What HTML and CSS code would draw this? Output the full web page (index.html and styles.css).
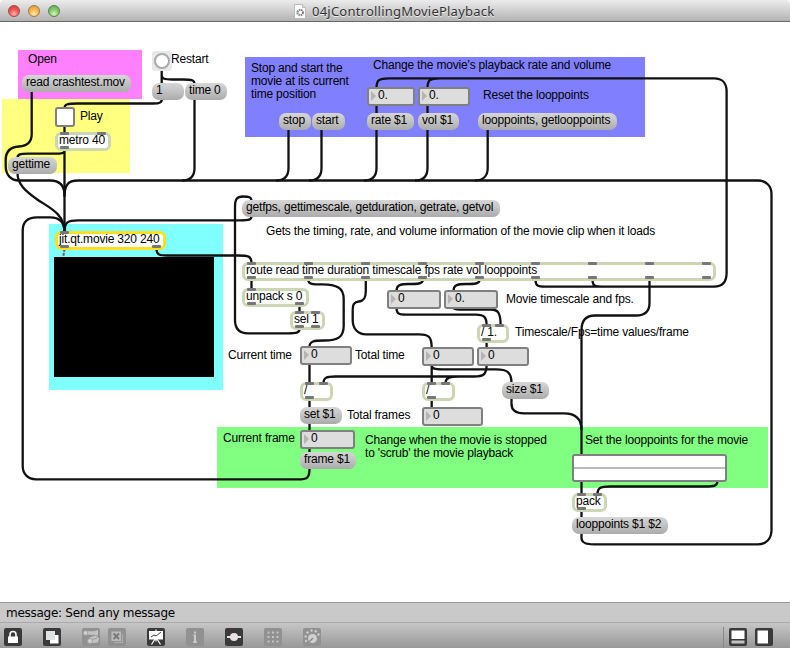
FILE: index.html
```html
<!DOCTYPE html>
<html lang="en">
<head>
<meta charset="utf-8">
<title>04jControllingMoviePlayback</title>
<link rel="stylesheet" href="styles.css">
</head>
<body>
<div class="window">
<header class="titlebar">
  <div class="lights"><i class="light red"></i><i class="light amber"></i><i class="light green"></i></div>
  <div class="title">
    <svg class="doc" width="12" height="15" viewBox="0 0 12 15"><path d="M.5.5h8l3 3v11H.5z" fill="#fafafa" stroke="#bbb"/><path d="M8.5.5v3h3" fill="#ddd" stroke="#bbb"/><circle cx="6.3" cy="8.5" r="2.7" fill="none" stroke="#777" stroke-width="1.8" stroke-dasharray="1.5 .7"/><path d="M3 7.5v3" stroke="#65bfe0"/><path d="M4 11l2 1" stroke="#e49a62"/></svg>
    <span>04jControllingMoviePlayback</span>
  </div>
</header>
<main class="patch">
  <div class="panel p-open"></div>
  <div class="panel p-play"></div>
  <div class="panel p-movie"></div>
  <div class="panel p-control"></div>
  <div class="panel p-frame"></div>

  <svg class="cords" width="790" height="580" viewBox="0 22 790 580">
    <g class="cord">
      <path d="M31.7 92V134C31.7 142 27 146 19 146.5C10 147 5.7 152 5.7 160V166C5.7 175 11 180.5 19 180.5H50C60 180.5 64.5 185 64.5 195"/>
      <path d="M161.7 70V83M161.7 75C161.7 79 165 79.5 172 79.5H183C192 79.5 194.5 80 194.5 84"/>
      <path d="M161.7 100C161.7 103.5 157 103.5 150 103.5H77C68 103.5 64.5 104 64.5 108"/>
      <path d="M64.5 126V133M64.5 150V232M64.5 151C64.5 154 58 153.7 50 153.7H28C20 153.7 17.5 154 17.5 158"/>
      <path d="M17.5 173C17.5 184 25 191 38 200C50 208 64.5 214 64.5 232"/>
      <path d="M194.5 100V168C194.5 176 190 180.5 182 180.5"/>
      <path d="M64.5 197C64.5 185 68 180.5 78 180.5H758C766 180.5 771.5 186 771.5 194V530C771.5 539 766 544.3 758 544.3H594C584 544.3 581.5 542 581.5 538V534"/>
      <path d="M288.5 130V168C288.5 176 284 180.5 276 180.5M321.5 130V168C321.5 176 317 180.5 309 180.5M376.5 105V168C376.5 176 372 180.5 364 180.5M427.5 105V168C427.5 176 423 180.5 415 180.5M487.7 130V168C487.7 176 483 180.5 475 180.5"/>
      <path d="M535.5 280C535.5 286 538 286.6 545 286.6H714C722 286.6 726.6 282 726.6 273V91C726.6 83 722 78.4 714 78.4H389C379 78.4 376.5 80 376.5 88M592.5 280C592.5 286 595 286.6 602 286.6M440 78.4C430 78.4 427.5 80 427.5 88"/>
      <path d="M299.5 329C299.5 333 296 333.3 288 333.3H248C240 333.3 235 329 235 320V207C235 199 237 196.5 243 196.5C249 196.5 251.5 197 251.5 201"/>
      <path d="M251.5 216C251.5 220 249 220.4 240 220.4H78C68 220.4 64.5 222 64.5 232"/>
      <path d="M156.5 249C156.5 255 160 255.5 167 255.5H238C248 255.5 251.5 256 251.5 263"/>
      <path d="M251.5 280V289M299.5 306V312"/>
      <path d="M308.3 280C308.3 284.3 313 284.3 322 284.3C337 284.3 343.7 288 343.7 299V326C343.7 337 338 340.5 324 340.5C314 340.5 309.5 341 309.5 347"/>
      <path d="M365.8 280V291C365.8 298 364 301 359 301.5C354 302 352.7 304 352.7 311V320C352.7 329 358 334.4 366 334.4H419C429 334.4 431.7 337 431.7 348"/>
      <path d="M422.8 280C422.8 284 417 284 409 284C400 284 396.5 285 396.5 291M479.5 280C479.5 284 474 284 466 284C457 284 453.5 285 453.5 291"/>
      <path d="M396.5 308C396.5 314 399 314.6 406 314.6H476C484 314.6 486.6 317 486.6 325M453.5 308C454 309.5 458 309.5 464 309.5H491C498 309.5 500.6 313 500.6 325"/>
      <path d="M486.6 342V348M486.6 365C486.6 375 483 376.5 474 376.5H335C326 376.5 323.5 378 323.5 383M459 376.5C449 376.5 445.6 378 445.6 383"/>
      <path d="M431.7 365V383M431.7 365C431.7 369 435 369.4 442 369.4H496C507 369.4 511.5 372 511.5 383M511.5 398V404C511.5 411 516 413.3 524 413.3H564C575 413.3 581.5 418 581.5 430"/>
      <path d="M309.5 364V469C309.5 478 307 479.3 298 479.3H36C28 479.3 22.7 474 22.7 466V231C22.7 222 28 217.4 37 217.4H50C60 217.4 64.5 222 64.5 232"/>
      <path d="M431.7 400V408M649.5 280V303C649.5 311 645 315.5 636 315.5H595C586 315.5 581.5 320 581.5 330V494M581.5 511V518"/>
      <path d="M717.5 481C717.5 486 714 486.5 705 486.5H610C600 486.5 597.5 488 597.5 494"/>
    </g>
    <path class="matrix" d="M64.5 249L63.3 257"/>
  </svg>

  <div class="screen"></div>

  <div class="note n-open">Open</div>
  <div class="note n-restart">Restart</div>
  <div class="note n-play">Play</div>
  <div class="note n-stop">Stop and start the<br>movie at its current<br>time position</div>
  <div class="note n-rate">Change the movie's playback rate and volume</div>
  <div class="note n-reset">Reset the looppoints</div>
  <div class="note n-info">Gets the timing, rate, and volume information of the movie clip when it loads</div>
  <div class="note n-fps">Movie timescale and fps.</div>
  <div class="note n-ratio">Timescale/Fps=time values/frame</div>
  <div class="note n-ctime">Current time</div>
  <div class="note n-ttime">Total time</div>
  <div class="note n-tframes">Total frames</div>
  <div class="note n-cframe">Current frame</div>
  <div class="note n-scrub">Change when the movie is stopped<br>to 'scrub' the movie playback</div>
  <div class="note n-loop">Set the looppoints for the movie</div>

  <div class="msg m-read">read crashtest.mov</div>
  <div class="msg m-one">1</div>
  <div class="msg m-time">time 0</div>
  <div class="msg m-gettime">gettime</div>
  <div class="msg m-stop">stop</div>
  <div class="msg m-start">start</div>
  <div class="msg m-rate">rate $1</div>
  <div class="msg m-vol">vol $1</div>
  <div class="msg m-reset">looppoints, getlooppoints</div>
  <div class="msg m-getfps">getfps, gettimescale, getduration, getrate, getvol</div>
  <div class="msg m-set">set $1</div>
  <div class="msg m-frame">frame $1</div>
  <div class="msg m-size">size $1</div>
  <div class="msg m-loop">looppoints $1 $2</div>

  <div class="bang"><i></i></div>
  <div class="toggle"></div>

  <div class="obj o-metro"><div class="ports"><i></i><i></i></div><span>metro 40</span><div class="ports"><i></i></div></div>
  <div class="obj o-jit"><div class="ports"><i></i></div><span>jit.qt.movie 320 240</span><div class="ports"><i></i><i></i></div></div>
  <div class="obj o-route"><div class="ports"><i></i><i></i><i></i><i></i><i></i><i></i><i></i><i></i><i></i></div><span>route read time duration timescale fps rate vol looppoints</span><div class="ports"><i></i><i></i><i></i><i></i><i></i><i></i><i></i><i></i><i></i></div></div>
  <div class="obj o-unpack"><div class="ports"><i></i></div><span>unpack s 0</span><div class="ports"><i></i><i></i></div></div>
  <div class="obj o-sel"><div class="ports"><i></i><i></i></div><span>sel 1</span><div class="ports"><i></i><i></i></div></div>
  <div class="obj o-ratio"><div class="ports"><i></i><i></i></div><span>/ 1.</span><div class="ports"><i></i></div></div>
  <div class="obj o-div1"><div class="ports"><i></i><i></i></div><span>/</span><div class="ports"><i></i></div></div>
  <div class="obj o-div2"><div class="ports"><i></i><i></i></div><span>/</span><div class="ports"><i></i></div></div>
  <div class="obj o-pack"><div class="ports"><i></i><i></i></div><span>pack</span><div class="ports"><i></i></div></div>

  <div class="num v-rate">0.</div>
  <div class="num v-vol">0.</div>
  <div class="num v-scale">0</div>
  <div class="num v-fps">0.</div>
  <div class="num v-ctime">0</div>
  <div class="num v-ttime">0</div>
  <div class="num v-ratio">0</div>
  <div class="num v-tframes">0</div>
  <div class="num v-cframe">0</div>

  <div class="rslider"></div>
</main>
<footer>
  <div class="status"><span>message: Send any message</span></div>
  <div class="toolbar">
    <svg class="tool" viewBox="0 0 18 18"><rect class="dark" width="18" height="18" rx="2"/><path d="M6 9V6.5a3 3 0 0 1 6 0V9" fill="none" stroke="#fff" stroke-width="1.6"/><rect x="4" y="8.5" width="10" height="6.5" fill="#fff"/></svg>
    <svg class="tool t-copy" viewBox="0 0 18 18"><rect class="dark" width="18" height="18" rx="2"/><rect x="7" y="7" width="8.5" height="8.5" fill="#fff"/><rect x="3" y="3" width="9" height="9" fill="#dde3e3"/></svg>
    <svg class="tool t-add" viewBox="0 0 18 18"><rect class="dim" width="18" height="18" rx="2"/><path d="M3 3.200h9l4-1.200v5.500L12 6.800H3zM7.500 9.500l6.500-2 3 3-1 4-7.500.7z" fill="#c4c4c4"/><path d="M9 8.500l3-1.500M9 12l6-2" stroke="#999"/><circle cx="3.500" cy="5" r="2.300" fill="#d2d2d2" stroke="#a2a2a2"/><circle cx="8" cy="13" r="2.500" fill="#d2d2d2" stroke="#a2a2a2"/></svg>
    <svg class="tool t-del" viewBox="0 0 18 18"><rect class="dim" width="18" height="18" rx="2"/><rect x="3.500" y="3.500" width="9.500" height="9.500" fill="#bbb"/><path d="M5.500 5.500l5.500 5.500M11 5.500L5.500 11" stroke="#777" stroke-width="1.8"/><path d="M14.500 6v8.500H6" fill="none" stroke="#b0b0b0"/></svg>
    <svg class="tool t-pres" viewBox="0 0 18 18"><rect class="dark" width="18" height="18" rx="2"/><rect x="2" y="3" width="14" height="8.500" fill="#fff"/><path d="M4 9l3-2 2 1 5-4" fill="none" stroke="#444"/><path d="M9 1.500v2M8 11l-3.500 5.500M10 11l3.500 5.500M9 11v2.500" stroke="#fff" stroke-width="1.200"/></svg>
    <svg class="tool t-info" viewBox="0 0 18 18"><rect class="dim" width="18" height="18" rx="2"/><path d="M9 3.500v2M7.500 7.500H9v6.500M7.300 14h3.500" fill="none" stroke="#ccc" stroke-width="2"/></svg>
    <svg class="tool t-cord" viewBox="0 0 18 18"><rect class="dark" width="18" height="18" rx="2"/><path d="M2 9h14" stroke="#e8e2e2" stroke-width="2"/><circle cx="9" cy="9" r="4" fill="#e8e2e2"/></svg>
    <svg class="tool t-grid" viewBox="0 0 18 18"><rect class="dim" width="18" height="18" rx="2"/><path d="M3.500 4.500h12M3.500 9h12M3.500 13.500h12" stroke="#c4c4c4" stroke-width="2" stroke-dasharray="2 2.500"/></svg>
    <svg class="tool t-dial" viewBox="0 0 18 18"><rect class="dim" width="18" height="18" rx="2"/><circle cx="9.500" cy="10.500" r="4.500" fill="#d0d0d0"/><g fill="#ccc"><circle cx="3" cy="13" r="1.200"/><circle cx="2.600" cy="8.500" r="1.200"/><circle cx="4.500" cy="4.500" r="1.200"/><circle cx="8.500" cy="2.500" r="1.200"/><circle cx="12.700" cy="3.300" r="1.200"/><circle cx="15.500" cy="6.500" r="1.200"/></g><path d="M10 10l-3.500 3.500" stroke="#888" stroke-width="1.500"/></svg>
    <div class="sep"></div>
    <svg class="tool t-bot" viewBox="0 0 18 18"><rect class="dark" width="18" height="18" rx="2"/><path d="M2.500 2.500h13v8.500h-13z" fill="#fff"/><path d="M2.500 12.500h13v3h-13z" fill="#c4c4c4"/></svg>
    <svg class="tool t-side" viewBox="0 0 18 18"><rect class="dark" width="18" height="18" rx="2"/><path d="M2.500 2.500h10.500v13H2.500z" fill="#fff"/></svg>
  </div>
</footer>
</div>
</body>
</html>
```
FILE: styles.css
```css
* { box-sizing: border-box; }
body { margin: 0; background: #fff; font-family: "Liberation Sans", Arial, sans-serif; color: #000; }
.window { width: 790px; height: 648px; display: flex; flex-direction: column; overflow: hidden; }

.titlebar { height: 22px; flex: none; display: flex; align-items: center; position: relative; background: linear-gradient(#ececec, #d0d0d0 50%, #b2b2b2); border-bottom: 1px solid #686868; border-radius: 4px 4px 0 0; }
.lights { display: flex; gap: 8px; padding-left: 8px; }
.light { width: 12px; height: 12px; border-radius: 50%; border: 1px solid; }
.red { background: radial-gradient(circle at 50% 80%, #ffb3a8, #ed5557 50%, #cf3c40); border-color: #a04848; }
.amber { background: radial-gradient(circle at 50% 80%, #ffe9a8, #f3b552 50%, #dd973a); border-color: #a27845; }
.green { background: radial-gradient(circle at 50% 80%, #d3f8b5, #86c670 50%, #5fa850); border-color: #558348; }
.title { position: absolute; left: 294px; top: 3px; display: flex; align-items: center; gap: 6px; height: 17px; font: 13px "Noto Sans", sans-serif; letter-spacing: .22px; color: #333; white-space: nowrap; text-shadow: 0 1px 0 #eee; }
.title span { margin-top: -2px; }

.patch { position: relative; height: 580px; flex: none; background: #fff; font-size: 12px; letter-spacing: -.18px; line-height: 13px; }
.patch > * { position: absolute; white-space: nowrap; }
.cords { left: 0; top: 0; }
.cord { fill: none; stroke: #111; stroke-width: 2.3; }
.matrix { fill: none; stroke: #666; stroke-width: 2; stroke-dasharray: 3 1; }
.note { margin-top: -1px; }

.p-open { left: 18px; top: 28px; width: 124px; height: 49px; background: #ff80ff; }
.p-play { left: 2px; top: 77px; width: 128px; height: 74px; background: #ffff80; }
.p-movie { left: 49px; top: 202px; width: 174px; height: 166px; background: #80ffff; }
.p-control { left: 245px; top: 35px; width: 400px; height: 80px; background: #8080ff; }
.p-frame { left: 217px; top: 405px; width: 551px; height: 61px; background: #80ff80; }
.screen { left: 54px; top: 235px; width: 160px; height: 120px; background: #000; }

.n-open { left: 28px; top: 32px; }
.n-restart { left: 171px; top: 32px; }
.n-play { left: 80px; top: 89px; }
.n-stop { left: 251px; top: 41px; }
.n-rate { left: 373px; top: 38px; }
.n-reset { left: 483px; top: 68px; }
.n-info { left: 266px; top: 204px; }
.n-fps { left: 506px; top: 272px; }
.n-ratio { left: 515px; top: 305px; }
.n-ctime { left: 228px; top: 328px; }
.n-ttime { left: 355px; top: 328px; }
.n-tframes { left: 347px; top: 388px; }
.n-cframe { left: 223px; top: 411px; }
.n-scrub { left: 365px; top: 413px; }
.n-loop { left: 585px; top: 413px; }

.msg { height: 17px; border-radius: 7px; padding: 1px 4px; background: linear-gradient(#d6d6d6, #c4c4c4 45%, #ababab); }
.m-read { left: 22px; top: 53px; width: 109px; }
.m-one { left: 152px; top: 61px; width: 32px; }
.m-time { left: 185px; top: 61px; width: 42px; }
.m-gettime { left: 8px; top: 135px; width: 49px; }
.m-stop { left: 279px; top: 91px; width: 32px; }
.m-start { left: 312px; top: 91px; width: 33px; }
.m-rate { left: 367px; top: 91px; width: 47px; }
.m-vol { left: 418px; top: 91px; width: 41px; }
.m-reset { left: 478px; top: 91px; width: 139px; }
.m-getfps { left: 242px; top: 178px; width: 258px; }
.m-set { left: 300px; top: 385px; width: 42px; }
.m-frame { left: 300px; top: 430px; width: 56px; }
.m-size { left: 502px; top: 360px; width: 47px; }
.m-loop { left: 572px; top: 495px; width: 96px; }

.bang { left: 152px; top: 29px; width: 20px; height: 20px; border-radius: 3px; background: #e8e8e8; display: grid; place-items: center; }
.bang i { width: 16px; height: 16px; border: 2px solid #aaa; border-radius: 50%; background: #fff; }
.toggle { left: 55px; top: 85px; width: 20px; height: 20px; border: 2px solid #808080; border-radius: 3px; background: #fff; }

.obj { height: 19px; border: 3px solid #ccd5b4; border-radius: 6px; background: #fff; display: flex; flex-direction: column; }
.obj span { height: 13px; padding-left: 1px; line-height: 11px; }
.ports { height: 3px; flex: none; margin: 0 2px; display: flex; justify-content: space-between; }
.ports:first-child { margin-top: -3px; }
.ports i { width: 9px; height: 3px; border-radius: 1px; background: #777; }
.o-metro { left: 55px; top: 110px; width: 56px; }
.o-jit { left: 55px; top: 209px; width: 111px; border-color: #ffdf1f; }
.o-route { left: 242px; top: 240px; width: 474px; }
.o-unpack { left: 242px; top: 266px; width: 67px; }
.o-sel { left: 290px; top: 289px; width: 35px; }
.o-ratio { left: 477px; top: 302px; width: 32px; }
.o-div1 { left: 300px; top: 360px; width: 33px; }
.o-div2 { left: 422px; top: 360px; width: 33px; }
.o-pack { left: 572px; top: 471px; width: 35px; }

.num { height: 19px; border: 2px solid #808080; border-radius: 3px; background: #ddd; padding: 0 0 0 9px; }
.num::before { content: ""; position: absolute; left: 2px; top: 2px; border: 5px solid transparent; border-left-color: #b4b4b4; border-right: 0; }
.v-rate { left: 367px; top: 65px; width: 48px; }
.v-vol { left: 418px; top: 65px; width: 52px; }
.v-scale { left: 387px; top: 268px; width: 54px; }
.v-fps { left: 444px; top: 268px; width: 54px; }
.v-ctime { left: 300px; top: 324px; width: 52px; }
.v-ttime { left: 422px; top: 325px; width: 52px; }
.v-ratio { left: 477px; top: 325px; width: 52px; }
.v-tframes { left: 422px; top: 385px; width: 61px; }
.v-cframe { left: 300px; top: 408px; width: 55px; }

.rslider { left: 572px; top: 432px; width: 155px; height: 28px; border: 2px solid #808080; border-radius: 3px; background: linear-gradient(#fff 11px, #bbb 11px, #bbb 13px, #fff 13px); }

footer { height: 46px; flex: none; display: flex; flex-direction: column; }
.status { height: 20px; flex: none; background: #c9c9c9; border-top: 1px solid #999; padding-left: 6px; font: 12px/21px "DejaVu Sans", sans-serif; letter-spacing: -.27px; }
.toolbar { height: 26px; display: flex; align-items: flex-start; padding: 5px 0 0 4px; background: linear-gradient(#c6c6c6, #989898); border-top: 1px solid #aaa; }
.tool { width: 18px; height: 18px; flex: none; }
.dark { fill: #3a3a3a; }
.dim { fill: #919191; }
.t-copy, .t-add, .t-pres, .t-info, .t-cord, .t-grid, .t-dial { margin-left: 21px; }
.t-del { margin-left: 8px; }
.sep { width: 1px; height: 21px; margin: -1px 5px 0 auto; background: #888; }
.t-side { margin: 0 17px 0 8px; }
```
